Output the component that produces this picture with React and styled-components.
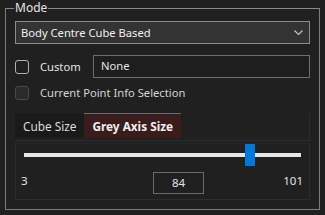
import React from 'react';
import styled, { createGlobalStyle } from 'styled-components';

const colors = {
  background: '#202020',
  text: '#e4e4e4',
  border: '#7d7d7d',
  faint: '#2d2d2d',
  accent: '#0078d7',
};

const GlobalStyle = createGlobalStyle`
  html, body {
    margin: 0;
    padding: 0;
    background-color: ${colors.background};
  }

  body {
    font-family: "Noto Sans", "Open Sans", sans-serif;
    font-size: 11.2px;
    color: ${colors.text};
  }
`;

const Group = styled.fieldset`
  box-sizing: border-box;
  width: 315px;
  height: 210px;
  margin: 0 0 0 5px;
  padding: 5px 9px 0 9px;
  border: 1px solid ${colors.border};
  border-top-color: #8a8a8a;
  display: flex;
  flex-direction: column;
`;

const Legend = styled.legend`
  margin-left: -1px;
  padding: 0 1px;
  font-size: 12px;
  line-height: 16px;
  color: ${colors.text};
`;

const Select = styled.div`
  box-sizing: border-box;
  display: flex;
  align-items: center;
  justify-content: space-between;
  height: 23px;
  padding: 0 6px 0 5px;
  border: 1px solid #8c8c8c;
  background-color: #333333;
  color: #f0f0f0;
`;

const Row = styled.div`
  display: flex;
  align-items: center;
  height: 23px;
  margin-top: ${(p) => p.$gap}px;
`;

const Check = styled.span`
  box-sizing: border-box;
  width: 14px;
  height: 14px;
  border: 1px solid ${(p) => (p.$disabled ? '#4a4a4a' : '#b0b0b0')};
  border-radius: 3px;
  background-color: ${(p) => (p.$disabled ? '#2a2a2a' : 'transparent')};
  margin-right: 11px;
`;

const CheckLabel = styled.span`
  width: ${(p) => (p.$width ? `${p.$width}px` : 'auto')};
  color: ${(p) => (p.$disabled ? '#d4d4d4' : colors.text)};
`;

const TextBox = styled.div`
  box-sizing: border-box;
  flex: 1;
  height: 23px;
  padding: 1px 7px;
  border: 1px solid #6e6e6e;
  background-color: #1e1e1e;
  line-height: 18px;
`;

const TabStrip = styled.div`
  box-sizing: border-box;
  display: flex;
  height: 28px;
  margin-top: 9px;
  border-right: 1px solid ${colors.faint};
  border-bottom: 1px solid ${colors.faint};
`;

const Tab = styled.div`
  box-sizing: border-box;
  display: flex;
  align-items: center;
  height: 25px;
  padding: 0 8px;
  border-top: 1px solid ${(p) => (p.$active ? '#6a6a6a' : 'transparent')};
  background-color: ${(p) => (p.$active ? '#3a1c1d' : '#1a1a1a')};
  font-weight: ${(p) => (p.$active ? 700 : 400)};
  font-size: 11.8px;
  color: ${(p) => (p.$active ? '#eeeeee' : '#dcdcdc')};
`;

const Panel = styled.div`
  box-sizing: border-box;
  height: 57px;
  margin-top: 2px;
  padding: 0 8px;
  border: 1px solid ${colors.faint};
  border-top-color: #262626;
`;

const Slider = styled.div`
  position: relative;
  height: 22px;
  display: flex;
  align-items: center;
`;

const Track = styled.div`
  width: 100%;
  height: 4px;
  background-color: #e6e6e6;
`;

const Thumb = styled.div`
  position: absolute;
  top: 0;
  width: 10px;
  height: 22px;
  background-color: ${colors.accent};
`;

const Scale = styled.div`
  display: flex;
  align-items: flex-start;
  justify-content: space-between;
  margin-top: 6px;
  font-size: 11.5px;
`;

const ScaleLabel = styled.span`
  width: 40px;
  margin-top: 1px;
  margin-left: ${(p) => (p.$start ? '-3px' : 0)};
  margin-right: ${(p) => (p.$end ? '-2px' : 0)};
  text-align: ${(p) => (p.$end ? 'right' : 'left')};
`;

const ValueBox = styled.div`
  box-sizing: border-box;
  width: 51px;
  height: 22px;
  border: 1px solid #6a6a6a;
  text-align: center;
  line-height: 20px;
  margin-left: 33px;
`;

const Chevron = () => (
  <svg width="9" height="5" viewBox="0 0 9 5">
    <path d="M0.5 0.5 L4.5 4.5 L8.5 0.5" fill="none" stroke="#c8c8c8" strokeWidth="1.1" />
  </svg>
);

const min = 3;
const max = 101;
const value = 84;

const App = () => {
  const ratio = (value - min) / (max - min);

  return (
    <>
      <GlobalStyle />
      <Group>
        <Legend>Mode</Legend>
        <Select>
          <span>Body Centre Cube Based</span>
          <Chevron />
        </Select>
        <Row $gap={11}>
          <Check />
          <CheckLabel $width={53}>Custom</CheckLabel>
          <TextBox>None</TextBox>
        </Row>
        <Row $gap={3}>
          <Check $disabled />
          <CheckLabel $disabled>Current Point Info Selection</CheckLabel>
        </Row>
        <TabStrip>
          <Tab>Cube Size</Tab>
          <Tab $active>Grey Axis Size</Tab>
        </TabStrip>
        <Panel>
          <Slider>
            <Track />
            <Thumb style={{ left: `calc(${ratio} * (100% - 10px))` }} />
          </Slider>
          <Scale>
            <ScaleLabel $start>{min}</ScaleLabel>
            <ValueBox>{value}</ValueBox>
            <ScaleLabel $end>{max}</ScaleLabel>
          </Scale>
        </Panel>
      </Group>
    </>
  );
};

export default App;
